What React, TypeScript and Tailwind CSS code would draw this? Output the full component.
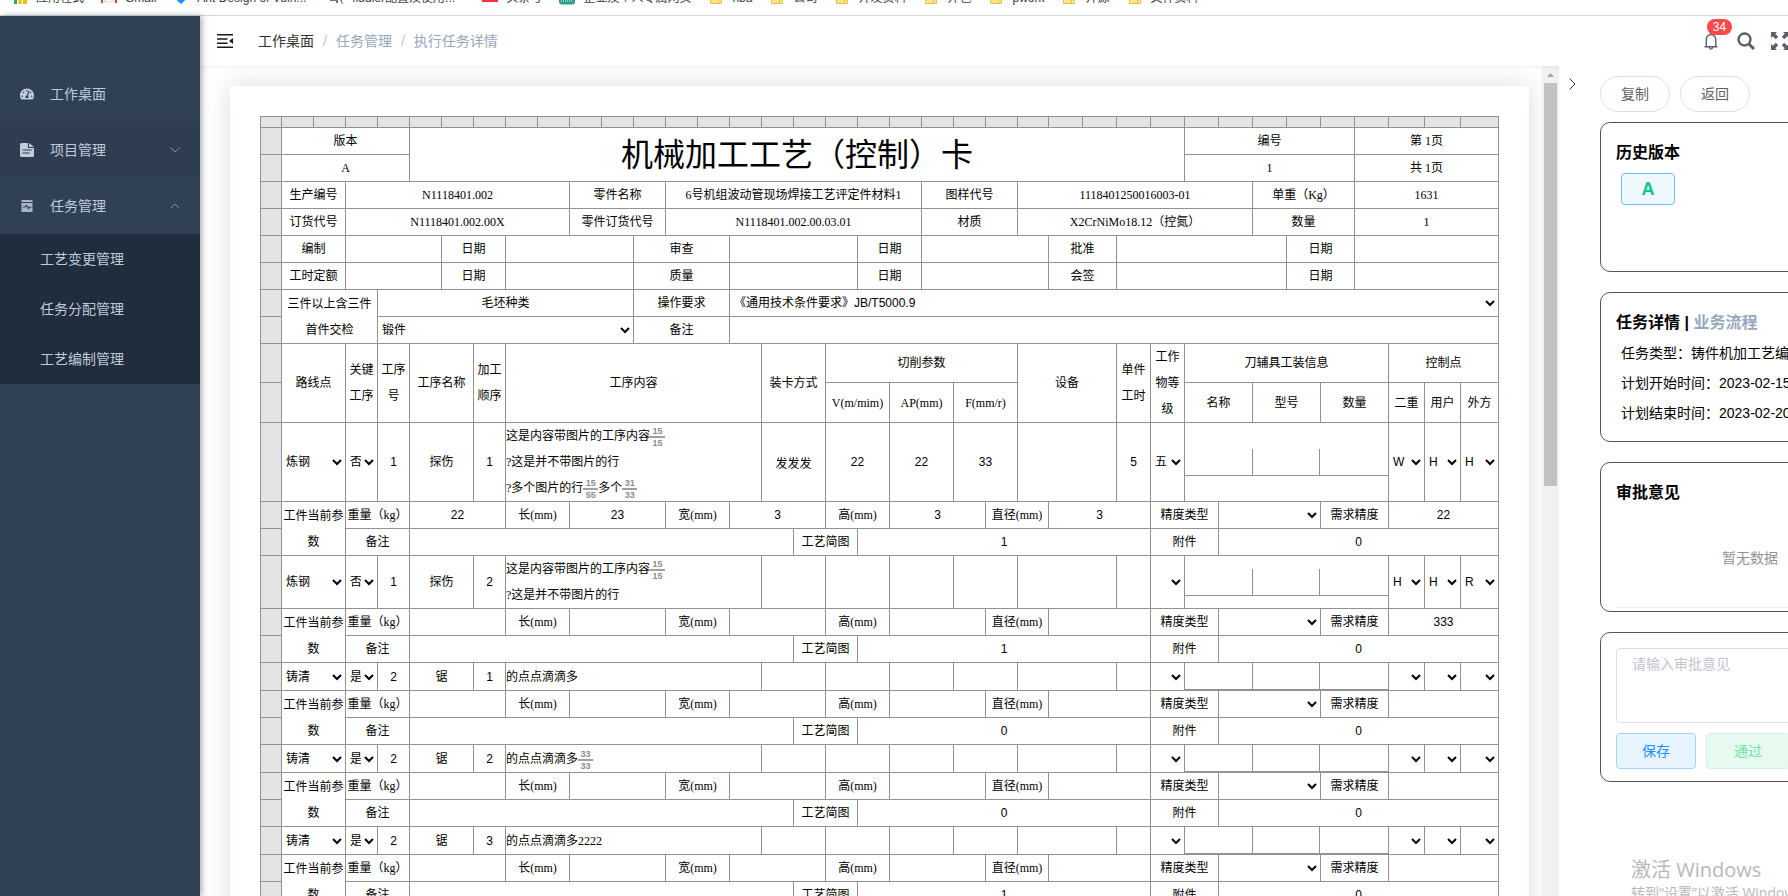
import type { ReactNode } from "react";
import clsx from "clsx";
import { AiOutlineBell } from "react-icons/ai";
import { FaTachometerAlt } from "react-icons/fa";

const bookmarks = [
  { icon: "apps", text: "应用程式", className: "" },
  { icon: "gmail", text: "Gmail", className: "" },
  { icon: "ant", text: "Ant Design of Vuln...", className: "w-[114px]" },
  { icon: "fiddler", text: "fiddler配置及使用...", className: "w-[113px]" },
  { icon: "red", text: "头条号", className: "" },
  { icon: "green", text: "企业及个人专属网页", className: "" },
  { icon: "folder", text: "nba", className: "" },
  { icon: "folder", text: "公司", className: "" },
  { icon: "folder", text: "开发资料", className: "" },
  { icon: "folder", text: "外包", className: "" },
  { icon: "folder", text: "pwork", className: "" },
  { icon: "folder", text: "开源", className: "" },
  { icon: "folder", text: "文件资料", className: "" },
];

type Step = {
  route: string;
  key: string;
  no: string;
  name: string;
  order: string;
  content: ReactNode;
  clamp?: string;
  cut?: string[];
  hours?: string;
  level?: string;
  control?: string[];
  params?: string[];
  precision?: string;
  sketches: string;
};

const steps: Step[] = [
  {
    route: "炼钢",
    key: "否",
    no: "1",
    name: "探伤",
    order: "1",
    content: (
      <>
        <p>
          这是内容带图片的工序内容
          <Fraction top="15" bottom="15" />
        </p>
        <p>?这是并不带图片的行</p>
        <p>
          ?多个图片的行
          <Fraction top="15" bottom="55" />
          多个
          <Fraction top="31" bottom="33" />
        </p>
      </>
    ),
    clamp: "发发发",
    cut: ["22", "22", "33"],
    hours: "5",
    level: "五",
    control: ["W", "H", "H"],
    params: ["22", "23", "3", "3", "3"],
    precision: "22",
    sketches: "1",
  },
  {
    route: "炼钢",
    key: "否",
    no: "1",
    name: "探伤",
    order: "2",
    content: (
      <>
        <p>
          这是内容带图片的工序内容
          <Fraction top="15" bottom="15" />
        </p>
        <p>?这是并不带图片的行</p>
      </>
    ),
    control: ["H", "H", "R"],
    precision: "333",
    sketches: "1",
  },
  { route: "铸清", key: "是", no: "2", name: "锯", order: "1", content: "的点点滴滴多", sketches: "0" },
  {
    route: "铸清",
    key: "是",
    no: "2",
    name: "锯",
    order: "2",
    content: (
      <p>
        的点点滴滴多
        <Fraction top="33" bottom="33" />
      </p>
    ),
    sketches: "0",
  },
  { route: "铸清", key: "是", no: "2", name: "锯", order: "3", content: "的点点滴滴多2222", sketches: "1" },
];

const paramLabels = ["重量（kg）", "长(mm)", "宽(mm)", "高(mm)", "直径(mm)"];

function BookmarkIcon({ kind }: { kind: string }) {
  if (kind === "apps") {
    return (
      <svg viewBox="0 0 16 16" className="h-4 w-4">
        <path fill="#34a853" d="M2 9h3v6H2z" />
        <path fill="#fbbc04" d="M6.500 9h3v6h-3zM11 9h4v6h-4z" />
      </svg>
    );
  }
  if (kind === "gmail") {
    return (
      <svg viewBox="0 0 16 16" className="h-4 w-4">
        <path fill="none" stroke="#d93f3f" strokeWidth="2" d="M1 14V4l7 5 7-5v10" />
        <path fill="#e8e8e8" d="M3 9l5 4 5-4v5H3z" />
      </svg>
    );
  }
  if (kind === "ant") {
    return (
      <svg viewBox="0 0 16 16" className="h-4 w-4">
        <path fill="#1890ff" d="M8 1l7 7.500-7 6.500-7-6.500z" />
      </svg>
    );
  }
  if (kind === "fiddler") {
    return (
      <svg viewBox="0 0 16 16" className="h-4 w-4">
        <path fill="#777" d="M2 9h8v5H8v-2H2zM11 9h2l2 6h-1z" />
      </svg>
    );
  }
  if (kind === "red") {
    return (
      <svg viewBox="0 0 16 16" className="h-4 w-4">
        <path fill="#f5343b" d="M0 2h16v11H0z" />
      </svg>
    );
  }
  if (kind === "green") {
    return (
      <svg viewBox="0 0 16 16" className="h-4 w-4">
        <rect width="16" height="15.500" rx="3" fill="#2a9d8f" />
        <path stroke="#d9f2ec" strokeDasharray="1 1" d="M2 12h12" />
      </svg>
    );
  }
  return (
    <svg viewBox="0 0 16 16" className="h-4 w-4">
      <path fill="#ffe38f" stroke="#e5c34b" d="M2.500 2.500h11v12h-11z" />
      <path stroke="#e5c34b" d="M10.500 11v3" />
    </svg>
  );
}

function BookmarkBar() {
  return (
    <div className="flex h-4 shrink-0 items-end overflow-hidden border-b border-[#d9d9d9] bg-white px-3">
      <nav className="flex gap-[17px] pb-2 text-xs leading-[18px] text-[#3c4043]">
        {bookmarks.map((item, i) => (
          <a key={i} href="#" className="flex shrink-0 gap-2 whitespace-nowrap">
            <BookmarkIcon kind={item.icon} />
            <span className={item.className}>{item.text}</span>
          </a>
        ))}
      </nav>
    </div>
  );
}

function Sidebar() {
  return (
    <aside className="relative z-10 w-[200px] shrink-0 bg-[#304156] pt-[50px] text-sm text-[#bfcbd9] shadow-[2px_0_6px_rgba(0,21,41,0.35)]">
      <nav>
        <a href="#" className="flex h-14 items-center px-5">
          <FaTachometerAlt className="h-[14px] w-[14px]" />
          <span className="ml-4">工作桌面</span>
        </a>
        <a href="#" className="flex h-14 items-center bg-[#2e3d52] px-5">
          <svg viewBox="0 0 14 14" className="h-[14px] w-[14px]" fill="currentColor">
            <path
              fillRule="evenodd"
              d="M1.500 0H8v5h6v7.500a1.500 1.500 0 0 1-1.500 1.500h-11A1.500 1.500 0 0 1 0 12.500v-11A1.500 1.500 0 0 1 1.500 0zM9 0l5 4H9zM2.500 6.500v1h9v-1zm0 3v1h7v-1z"
            />
          </svg>
          <span className="ml-4">项目管理</span>
          <svg viewBox="0 0 10 6" className="ml-auto h-[6px] w-[10px]" fill="none" stroke="#8491a3">
            <path d="M.5.5L5 5l4.500-4.500" />
          </svg>
        </a>
        <a href="#" className="flex h-14 items-center px-5">
          <svg viewBox="0 0 14 14" className="h-[14px] w-[14px]" fill="#a9b5c4">
            <path d="M1.500 1h11v2h-11zM1.500 4h11v9h-11z" />
            <path fill="none" stroke="#304156" strokeWidth="1.200" d="M3 8h2l1.500-1.500L8.500 9.500 10 8h1.500" />
          </svg>
          <span className="ml-4">任务管理</span>
          <svg viewBox="0 0 10 6" className="ml-auto h-[6px] w-[10px]" fill="none" stroke="#8491a3">
            <path d="M.5 5.500L5 1l4.500 4.500" />
          </svg>
        </a>
        <div className="bg-[#1f2d3d]">
          {["工艺变更管理", "任务分配管理", "工艺编制管理"].map((item) => (
            <a key={item} href="#" className="flex h-[50px] items-center pl-10">
              {item}
            </a>
          ))}
        </div>
      </nav>
    </aside>
  );
}

function Header() {
  return (
    <header className="relative flex h-[50px] shrink-0 items-center bg-white pl-[17px] shadow-[0_1px_4px_rgba(0,21,41,0.08)]">
      <button aria-label="折叠菜单">
        <svg viewBox="0 0 16 14" className="h-[14px] w-4" fill="#1a1a1a">
          <path d="M0 0h16v1.500H0zM0 4.200h10.500v1.500H0zM0 8.400h10.500v1.500H0zM0 12.500h16V14H0zM16 4v6l-4-3z" />
        </svg>
      </button>
      <nav className="ml-[25px] flex gap-[9px] text-sm text-[#97a8be]">
        <a href="#" className="text-[#303133]">
          工作桌面
        </a>
        <span className="text-[#c0c4cc]">/</span>
        <a href="#">任务管理</a>
        <span className="text-[#c0c4cc]">/</span>
        <span>执行任务详情</span>
      </nav>
      <div className="-mr-px ml-auto flex items-center gap-4 text-[#5a5e66]">
        <button aria-label="消息" className="relative">
          <AiOutlineBell className="h-5 w-5" />
          <span className="absolute -top-3 left-[6px] h-4 w-[25px] rounded-full bg-[#ff4949] text-center text-xs leading-4 text-white">
            34
          </span>
        </button>
        <button aria-label="搜索">
          <svg viewBox="0 0 18 18" className="h-[18px] w-[18px]" fill="none" stroke="currentColor">
            <circle cx="7.500" cy="7.500" r="6" strokeWidth="2.400" />
            <path strokeWidth="3" d="M11.800 11.800L17 17" />
          </svg>
        </button>
        <button aria-label="全屏">
          <svg viewBox="0 0 18 18" className="h-[18px] w-[18px]" fill="currentColor">
            <path d="M0 0h6L4.200 1.800l3 3-2.400 2.400-3-3L0 6zM18 0v6l-1.800-1.800-3 3-2.400-2.400 3-3L12 0zM0 18v-6l1.800 1.800 3-3 2.400 2.400-3 3L6 18zM18 18h-6l1.800-1.800-3-3 2.400-2.400 3 3L18 12z" />
          </svg>
        </button>
      </div>
    </header>
  );
}

function Fraction({ top, bottom }: { top: string; bottom: string }) {
  return (
    <span className="inline-flex w-[15px] flex-col text-center align-middle font-['Liberation_Sans',sans-serif] text-[9px] leading-[10px] font-bold text-[#8c8c8c]">
      <span className="border-b-2 border-[#a0a0a0]">{top}</span>
      <span>{bottom}</span>
    </span>
  );
}

function Cell({ span = 1, rows = 1, className, children }: { span?: number; rows?: number; className?: string; children?: ReactNode }) {
  return (
    <td colSpan={span} rowSpan={rows} className={clsx("border-r border-b border-[#929292] p-0", className)}>
      {children}
    </td>
  );
}

function RowHead() {
  return <td className="border-r border-b border-[#929292] bg-[#e4e4e4] p-0" />;
}

function Field({ label, value = "" }: { label: string; value?: string }) {
  return (
    <input
      aria-label={label}
      defaultValue={value}
      className="block h-[26px] w-full bg-transparent text-center font-['Liberation_Sans','Noto_Sans_CJK_SC',sans-serif] text-xs outline-none"
    />
  );
}

function Select({ label, value = "" }: { label: string; value?: string }) {
  return (
    <select
      aria-label={label}
      defaultValue={value}
      className="block h-[26px] w-full border-0 bg-transparent font-['Liberation_Sans','Noto_Sans_CJK_SC',sans-serif] text-xs text-black outline-none"
    >
      <option>{value}</option>
    </select>
  );
}

function StepRows({ step }: { step: Step }) {
  const cut = step.cut ?? ["", "", ""];
  const control = step.control ?? ["", "", ""];
  const params = step.params ?? [];

  return (
    <>
      <tr>
        <RowHead />
        <Cell span={2}>
          <Select label="路线点" value={step.route} />
        </Cell>
        <Cell>
          <Select label="关键工序" value={step.key} />
        </Cell>
        <Cell>
          <Field label="工序号" value={step.no} />
        </Cell>
        <Cell span={2}>{step.name}</Cell>
        <Cell>
          <Field label="加工顺序" value={step.order} />
        </Cell>
        <Cell span={8} className="text-left">
          {step.content}
        </Cell>
        <Cell span={2}>
          <Field label="装卡方式" value={step.clamp} />
        </Cell>
        {cut.map((value, i) => (
          <Cell key={i} span={2}>
            <Field label="切削参数" value={value} />
          </Cell>
        ))}
        <Cell span={3} />
        <Cell>
          <Field label="单件工时" value={step.hours} />
        </Cell>
        <Cell>
          <Select label="工作物等级" value={step.level} />
        </Cell>
        <Cell span={6}>
          <div className="grid h-[27px] grid-cols-3 border-b border-[#929292]">
            <div className="border-r border-[#929292]" />
            <div className="border-r border-[#929292]" />
            <div />
          </div>
        </Cell>
        {control.map((value, i) => (
          <Cell key={i}>
            <Select label="控制点" value={value} />
          </Cell>
        ))}
      </tr>
      <tr className="h-[27px]">
        <RowHead />
        <Cell span={2} rows={2}>
          工件当前参数
        </Cell>
        {paramLabels.map((label, i) => (
          <ParamPair key={label} label={label} value={params[i]} />
        ))}
        <Cell span={2}>精度类型</Cell>
        <Cell span={3}>
          <Select label="精度类型" />
        </Cell>
        <Cell span={2}>需求精度</Cell>
        <Cell span={3}>
          <Field label="需求精度" value={step.precision} />
        </Cell>
      </tr>
      <tr className="h-[27px]">
        <RowHead />
        <Cell span={2}>备注</Cell>
        <Cell span={12} />
        <Cell span={2}>工艺简图</Cell>
        <Cell span={9} className="font-['Liberation_Sans',sans-serif]">
          {step.sketches}
        </Cell>
        <Cell span={2}>附件</Cell>
        <Cell span={8} className="font-['Liberation_Sans',sans-serif]">
          0
        </Cell>
      </tr>
    </>
  );
}

function ParamPair({ label, value }: { label: string; value?: string }) {
  return (
    <>
      <Cell span={2} className="whitespace-nowrap">
        {label}
      </Cell>
      <Cell span={3}>
        <Field label={label} value={value} />
      </Cell>
    </>
  );
}

function ProcessCard() {
  return (
    <table className="w-full table-fixed border-separate border-spacing-0 border-t border-l border-[#929292] text-center font-['Liberation_Serif','Noto_Sans_CJK_SC',serif] text-xs leading-[26px] text-black">
      <colgroup>
        <col className="w-[21px]" />
        <col span={23} className="w-[32px]" />
        <col className="w-[31px]" />
        <col span={10} className="w-[34px]" />
        <col span={2} className="w-[36px]" />
        <col className="w-[38px]" />
      </colgroup>
      <tbody>
        <tr className="h-[11px]">
          {Array.from({ length: 38 }, (_, i) => (
            <RowHead key={i} />
          ))}
        </tr>
        <tr className="h-[27px]">
          <RowHead />
          <Cell span={4}>版本</Cell>
          <Cell span={24} rows={2} className="text-[32px]">
            机械加工工艺（控制）卡
          </Cell>
          <Cell span={5}>编号</Cell>
          <Cell span={4}>第 1页</Cell>
        </tr>
        <tr className="h-[27px]">
          <RowHead />
          <Cell span={4}>A</Cell>
          <Cell span={5}>1</Cell>
          <Cell span={4}>共 1页</Cell>
        </tr>
        {[
          ["生产编号", "N1118401.002", "零件名称", "6号机组波动管现场焊接工艺评定件材料1", "图样代号", "1118401250016003-01", "单重（Kg）", "1631"],
          ["订货代号", "N1118401.002.00X", "零件订货代号", "N1118401.002.00.03.01", "材质", "X2CrNiMo18.12（控氮）", "数量", "1"],
        ].map((row) => (
          <tr key={row[0]} className="h-[27px]">
            <RowHead />
            {[2, 7, 3, 8, 3, 7, 3, 4].map((span, i) => (
              <Cell key={i} span={span}>
                {row[i]}
              </Cell>
            ))}
          </tr>
        ))}
        {[
          ["编制", "", "日期", "", "审查", "", "日期", "", "批准", "", "日期", ""],
          ["工时定额", "", "日期", "", "质量", "", "日期", "", "会签", "", "日期", ""],
        ].map((row) => (
          <tr key={row[0]} className="h-[27px]">
            <RowHead />
            {[2, 3, 2, 4, 3, 4, 2, 4, 2, 5, 2, 4].map((span, i) => (
              <Cell key={i} span={span}>
                {row[i]}
              </Cell>
            ))}
          </tr>
        ))}
        <tr className="h-[27px]">
          <RowHead />
          <Cell span={3} rows={2}>
            三件以上含三件
            <br />
            首件交检
          </Cell>
          <Cell span={8}>毛坯种类</Cell>
          <Cell span={3}>操作要求</Cell>
          <Cell span={23}>
            <Select label="操作要求" value="《通用技术条件要求》JB/T5000.9" />
          </Cell>
        </tr>
        <tr className="h-[27px]">
          <RowHead />
          <Cell span={8}>
            <Select label="毛坯种类" value="锻件" />
          </Cell>
          <Cell span={3}>备注</Cell>
          <Cell span={23} />
        </tr>
        <tr className="h-[39px]">
          <RowHead />
          <Cell span={2} rows={2}>
            路线点
          </Cell>
          <Cell rows={2}>关键工序</Cell>
          <Cell rows={2}>工序号</Cell>
          <Cell span={2} rows={2}>
            工序名称
          </Cell>
          <Cell rows={2}>加工顺序</Cell>
          <Cell span={8} rows={2}>
            工序内容
          </Cell>
          <Cell span={2} rows={2}>
            装卡方式
          </Cell>
          <Cell span={6}>切削参数</Cell>
          <Cell span={3} rows={2}>
            设备
          </Cell>
          <Cell rows={2}>单件工时</Cell>
          <Cell rows={2}>工作物等级</Cell>
          <Cell span={6}>刀辅具工装信息</Cell>
          <Cell span={3}>控制点</Cell>
        </tr>
        <tr className="h-[40px]">
          <RowHead />
          {["V(m/mim)", "AP(mm)", "F(mm/r)", "名称", "型号", "数量"].map((item) => (
            <Cell key={item} span={2}>
              {item}
            </Cell>
          ))}
          <Cell>二重</Cell>
          <Cell>用户</Cell>
          <Cell>外方</Cell>
        </tr>
        {steps.map((step, i) => (
          <StepRows key={i} step={step} />
        ))}
      </tbody>
    </table>
  );
}

function Scrollbar() {
  return (
    <div className="flex w-[17px] shrink-0 flex-col items-center bg-[#f1f1f1]">
      <svg viewBox="0 0 17 17" className="h-[17px] w-[17px]" fill="#a3a3a3">
        <path d="M5 11l3.500-4 3.500 4z" />
      </svg>
      <div className="h-[403px] w-[13px] bg-[#c1c1c1]" />
    </div>
  );
}

function Card({ children }: { children: ReactNode }) {
  return <section className="mb-5 h-[150px] rounded-[10px] border border-[#555] p-[15px]">{children}</section>;
}

function SidePanel() {
  return (
    <aside className="relative flex w-[229px] shrink-0 overflow-hidden bg-white pt-[10px] text-sm">
      <button aria-label="收起" className="mt-[2px] h-3 w-[41px] shrink-0 pl-[10px]">
        <svg viewBox="0 0 7 12" className="h-3 w-[7px]" fill="none" stroke="#303133">
          <path d="M.5.5L6 6 .5 11.500" />
        </svg>
      </button>
      {/* the cards are wider than the panel and run under its edge */}
      <div className="w-[300px] shrink-0">
        <div className="mb-[10px] flex gap-[10px]">
          <button className="h-9 w-[70px] rounded-full border border-[#dcdfe6] text-[#606266]">复制</button>
          <button className="h-9 w-[70px] rounded-full border border-[#dcdfe6] text-[#606266]">返回</button>
        </div>
        <Card>
          <h2 className="text-base leading-[30px] font-bold text-black">历史版本</h2>
          <button className="mt-[5px] ml-[5px] h-8 w-[54px] rounded border border-[#70c0f5] bg-[#f0f8ff] text-lg leading-none font-bold text-[#0cc58c]">
            A
          </button>
        </Card>
        <Card>
          <h2 className="text-base leading-[30px] font-bold text-black">
            任务详情 | <a href="#" className="text-[#97a8be]">业务流程</a>
          </h2>
          <ul className="pl-[5px] leading-[30px] whitespace-nowrap text-black">
            <li>任务类型：铸件机加工艺编制</li>
            <li>计划开始时间：2023-02-15</li>
            <li>计划结束时间：2023-02-20</li>
          </ul>
        </Card>
        <Card>
          <h2 className="text-base leading-[30px] font-bold text-black">审批意见</h2>
          <p className="flex h-[100px] items-center justify-center border-b border-[#ebeef5] text-[#909399]">暂无数据</p>
        </Card>
        <Card>
          <textarea
            aria-label="审批意见"
            placeholder="请输入审批意见"
            className="block h-[75px] w-full resize-none rounded border border-[#dcdfe6] px-[15px] py-[5px] leading-5 outline-none placeholder:text-[#c0c4cc]"
          />
          <div className="mt-[10px] flex gap-[10px]">
            <button className="h-9 w-20 rounded border border-[#a3d3ff] bg-[#e8f4ff] text-[#1890ff]">保存</button>
            <button className="h-9 w-[84px] rounded border border-[#d0f5e0] bg-[#e7faf0] text-[#71e2a3]">通过</button>
          </div>
        </Card>
      </div>
      <div className="absolute -bottom-2 left-[72px] font-['Open_Sans','Noto_Sans_CJK_SC',sans-serif] whitespace-nowrap text-[#b8b8b8]">
        <p className="text-xl leading-6">激活 Windows</p>
        <p className="leading-[22px]">转到“设置”以激活 Windows。</p>
      </div>
    </aside>
  );
}

export default function App() {
  return (
    <div className="flex h-screen flex-col overflow-hidden bg-white font-['Liberation_Sans','Noto_Sans_CJK_SC',sans-serif]">
      <BookmarkBar />
      <div className="flex min-h-0 flex-1">
        <Sidebar />
        <div className="flex min-w-0 flex-1 flex-col">
          <Header />
          <div className="flex min-h-0 flex-1">
            <main className="min-w-0 flex-1 overflow-hidden pt-5 pr-[13px] pl-[30px]">
              <div className="bg-white p-[30px] shadow-[0_0_25px_#dedada]">
                <ProcessCard />
              </div>
            </main>
            <Scrollbar />
            <SidePanel />
          </div>
        </div>
      </div>
    </div>
  );
}
